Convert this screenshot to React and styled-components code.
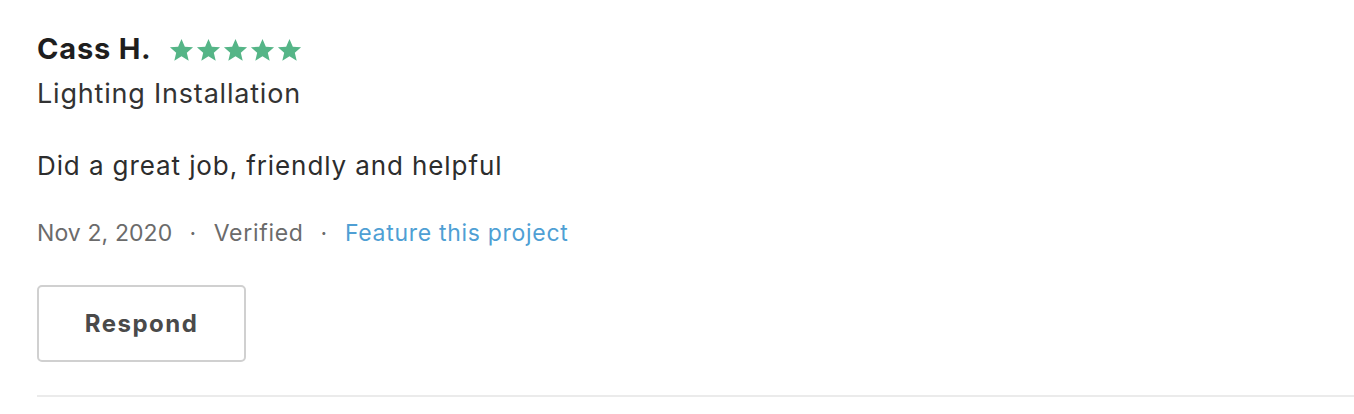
import React from 'react'
import styled, { createGlobalStyle } from 'styled-components'

const GlobalStyle = createGlobalStyle`
    body {
        margin: 0;
        background: #ffffff;
        font-family: Inter, "Open Sans", sans-serif;
    }
`

const Review = styled.div`
    padding: 29px 0 0 37px;
`

const Header = styled.div`
    display: flex;
    align-items: center;
    gap: 17px;
    height: 40px;
`

const Name = styled.span`
    font-size: 29px;
    line-height: 40px;
    font-weight: 700;
    letter-spacing: 0.8px;
    color: #1e1e1e;
`

const Stars = styled.div`
    display: flex;
    gap: 2px;
    padding-top: 2px;
`

const Service = styled.div`
    margin-top: 10px;
    font-size: 27px;
    line-height: 30px;
    letter-spacing: 0.8px;
    color: #333333;
`

const Body = styled.p`
    margin: 42px 0 0;
    font-size: 26px;
    line-height: 30px;
    letter-spacing: 0.9px;
    color: #2d2d2d;
`

const Meta = styled.div`
    display: flex;
    align-items: center;
    margin-top: 38px;
    font-size: 23px;
    line-height: 28px;
    letter-spacing: 0.7px;
    color: #6b6b6b;
`

const Date = styled.span`
    letter-spacing: 0.1px;
`

const Dot = styled.span`
    margin: 0 17px;
`

const Link = styled.a`
    color: #4f9fd4;
    text-decoration: none;
    cursor: pointer;
`

const Button = styled.button`
    display: block;
    margin-top: 38px;
    width: 209px;
    height: 77px;
    background: #ffffff;
    border: 2px solid #d0d0d0;
    border-radius: 5px;
    font-family: inherit;
    font-size: 24px;
    font-weight: 700;
    letter-spacing: 1.5px;
    color: #4a4a4a;
`

const Divider = styled.hr`
    margin: 33px 0 0;
    border: none;
    border-top: 2px solid #ebebeb;
`

function Star() {
    return (
        <svg width="25" height="25" viewBox="0 0 24 24">
            <path fill="#55b587" d="M12 1l3.2 7.3 7.9.6-6 5.2 1.8 7.7L12 17.6l-6.9 4.2 1.8-7.7-6-5.2 7.9-.6z" />
        </svg>
    )
}

export default function App() {
    return (
        <Review>
            <GlobalStyle />
            <Header>
                <Name>Cass H.</Name>
                <Stars>
                    {[0, 1, 2, 3, 4].map(i => <Star key={i} />)}
                </Stars>
            </Header>
            <Service>Lighting Installation</Service>
            <Body>Did a great job, friendly and helpful</Body>
            <Meta>
                <Date>Nov 2, 2020</Date>
                <Dot>·</Dot>
                <span>Verified</span>
                <Dot>·</Dot>
                <Link>Feature this project</Link>
            </Meta>
            <Button>Respond</Button>
            <Divider />
        </Review>
    )
}
